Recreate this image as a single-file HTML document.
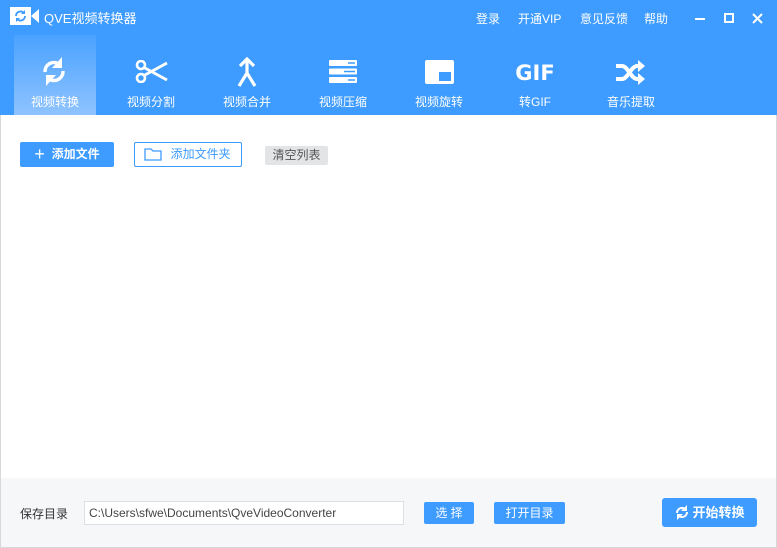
<!DOCTYPE html>
<html><head><meta charset="utf-8"><style>
*{margin:0;padding:0;box-sizing:border-box}
body{width:777px;height:548px;overflow:hidden;background:#fff;font-family:"Liberation Sans","Noto Sans CJK SC",sans-serif;position:relative}
.hdr{position:absolute;left:0;top:0;width:777px;height:115px;background:#3e9bff}
.abs{position:absolute}
.w{color:#fff}
.tab{position:absolute;top:35px;width:82px;height:80px;text-align:center;color:#fff;font-size:12px}
.tab .lb{position:absolute;left:0;right:0;top:58px}
.tab svg{position:absolute;top:22px}
.active{background:linear-gradient(#4aa2ff,#8fc3ff);}
.body{position:absolute;left:0;top:115px;width:777px;height:363px;border-left:1px solid #d8d8d8;border-right:1px solid #d8d8d8}
.foot{position:absolute;left:0;top:478px;width:777px;height:70px;background:#f6f7f9;border:1px solid #d8d8d8;border-top:none}
.btn{position:absolute;font-size:12px;text-align:center;border-radius:2px}
</style></head><body>
<div class="hdr"></div>
<svg class="abs" style="left:10px;top:7px" width="30" height="18" viewBox="0 0 30 18"><rect x="0" y="0" width="21" height="18" fill="#fff"/><path d="M21 9 L29 2 V16 Z" fill="#fff"/><path d="M6 9a4.5 4.5 0 0 1 8-2.8M15 9a4.5 4.5 0 0 1-8 2.8" stroke="#3e9bff" stroke-width="1.8" fill="none"/><path d="M15 3v4h-4z M6 15v-4h4z" fill="#3e9bff"/></svg>
<div class="abs w" style="left:44px;top:8px;font-size:13px">QVE视频转换器</div>
<div class="abs w" style="left:476px;top:10px;font-size:12px">登录</div>
<div class="abs w" style="left:518px;top:10px;font-size:12px">开通VIP</div>
<div class="abs w" style="left:580px;top:10px;font-size:12px">意见反馈</div>
<div class="abs w" style="left:644px;top:10px;font-size:12px">帮助</div>
<div class="abs" style="left:695px;top:18px;width:10px;height:2px;background:#fff"></div>
<div class="abs" style="left:724px;top:13px;width:10px;height:10px;border:2px solid #fff"></div>
<svg class="abs" style="left:752px;top:13px" width="11" height="11"><path d="M1 1L10 10M10 1L1 10" stroke="#fff" stroke-width="2"/></svg>

<div class="tab active" style="left:14px"><svg style="left:27px;top:20px" width="26" height="33" viewBox="0 0 26 33"><path d="M4 17a9 9 0 0 1 14-8M22 16a9 9 0 0 1-14 8" stroke="#fff" stroke-width="3.5" fill="none"/><path d="M21 2v11h-10z M5 31v-11h10z" fill="#fff"/></svg><div class="lb">视频转换</div></div>
<div class="tab" style="left:110px"><svg style="left:25px;top:25px" width="33" height="23" viewBox="0 0 33 23"><circle cx="6" cy="5" r="4" stroke="#fff" stroke-width="2.6" fill="none"/><circle cx="6" cy="18" r="4" stroke="#fff" stroke-width="2.6" fill="none"/><path d="M9 7.5L32 20M9 15.5L32 3" stroke="#fff" stroke-width="2.8"/></svg><div class="lb">视频分割</div></div>
<div class="tab" style="left:206px"><svg style="left:31px;top:22px" width="20" height="31" viewBox="0 0 20 31"><path d="M10 3V16L2 29M10 16L18 29M3 9L10 2L17 9" stroke="#fff" stroke-width="3.2" fill="none"/></svg><div class="lb">视频合并</div></div>
<div class="tab" style="left:302px"><svg style="left:26px;top:25px" width="30" height="23" viewBox="0 0 30 23"><rect x="1" y="0" width="28" height="6" rx="1" fill="#fff"/><rect x="1" y="8.5" width="28" height="6" rx="1" fill="#fff"/><rect x="1" y="17" width="28" height="6" rx="1" fill="#fff"/><path d="M20 3h7M16 11.5h11M20 20h7" stroke="#3e9bff" stroke-width="1.6"/></svg><div class="lb">视频压缩</div></div>
<div class="tab" style="left:398px"><svg style="left:27px;top:25px" width="29" height="24" viewBox="0 0 29 24"><rect x="0" y="0" width="29" height="24" rx="2" fill="#fff"/><rect x="14" y="12" width="12" height="9" fill="#3e9bff"/></svg><div class="lb">视频旋转</div></div>
<div class="tab" style="left:494px"><div style="position:absolute;left:0;right:0;top:26px;font-size:21px;font-weight:bold;font-family:'DejaVu Sans',sans-serif">GIF</div><div class="lb">转GIF</div></div>
<div class="tab" style="left:590px"><svg style="left:26px;top:25px" width="30" height="25" viewBox="0 0 30 25"><path d="M0 6h6c6 0 9 13 15 13h3M0 19h6c6 0 9-13 15-13h3" stroke="#fff" stroke-width="4" fill="none"/><path d="M22 0l7 6-7 6zM22 13l7 6-7 6z" fill="#fff"/></svg><div class="lb">音乐提取</div></div>

<div class="body"></div>
<div class="btn" style="left:20px;top:142px;width:94px;height:25px;background:#3e9bff;color:#fff;font-weight:bold;line-height:25px"><span style="font-size:18px;font-weight:normal;vertical-align:-2px">+</span>&nbsp; 添加文件</div>
<div class="btn" style="left:134px;top:142px;width:108px;height:25px;border:1px solid #3e9bff;color:#3e9bff;line-height:23px;padding-left:22px"><svg style="position:absolute;left:9px;top:5px" width="18" height="13"><path d="M1 1h6l2 2h8v9H1z" stroke="#3e9bff" stroke-width="1.3" fill="none"/></svg>&nbsp;添加文件夹</div>
<div class="btn" style="left:265px;top:146px;width:63px;height:19px;background:#e3e4e6;color:#555;line-height:19px">清空列表</div>

<div class="foot"></div>
<div class="abs" style="left:20px;top:505px;font-size:12px;color:#333">保存目录</div>
<div class="abs" style="left:84px;top:501px;width:320px;height:24px;background:#fff;border:1px solid #dcdfe6;font-size:12px;color:#444;line-height:22px;padding-left:4px">C:\Users\sfwe\Documents\QveVideoConverter</div>
<div class="btn" style="left:424px;top:502px;width:50px;height:22px;background:#3e9bff;color:#fff;line-height:22px">选 择</div>
<div class="btn" style="left:494px;top:502px;width:71px;height:22px;background:#3e9bff;color:#fff;line-height:22px">打开目录</div>
<div class="btn" style="left:662px;top:498px;width:95px;height:29px;background:#3e9bff;color:#fff;font-weight:bold;font-size:13px;line-height:29px;border-radius:3px;padding-left:18px"><svg style="position:absolute;left:12px;top:6px" width="16" height="17" viewBox="0 0 16 17"><path d="M3 9a5 5 0 0 1 8-4M13 8a5 5 0 0 1-8 4" stroke="#fff" stroke-width="2" fill="none"/><path d="M13 1v6h-6zM3 16v-6h6z" fill="#fff"/></svg>开始转换</div>
</body></html>
